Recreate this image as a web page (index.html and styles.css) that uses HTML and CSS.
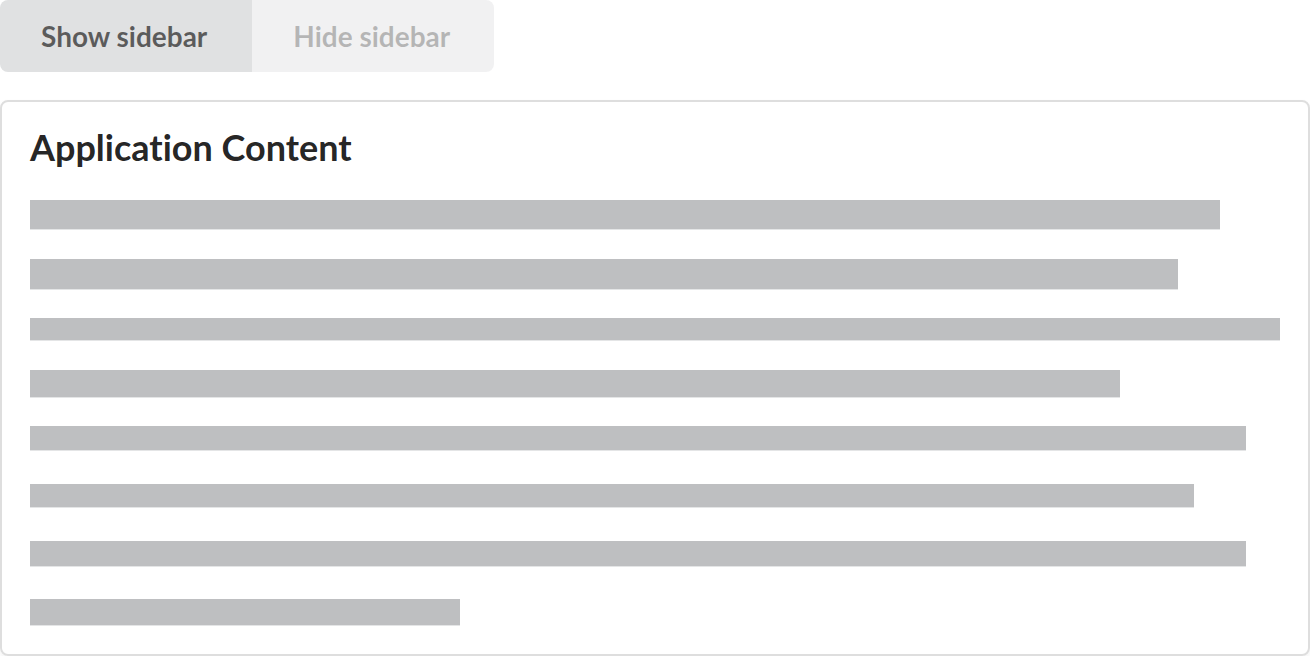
FILE: index.html
```html
<!DOCTYPE html>
<html>
<head>
<meta charset="utf-8">
<link rel="stylesheet" href="styles.css">
</head>
<body>
<div class="buttons">
  <button class="btn show">Show sidebar</button>
  <button class="btn disabled">Hide sidebar</button>
</div>
<div class="segment">
  <h3 class="header">Application Content</h3>
  <div class="lines">
    <div class="line" style="width:1190px;height:29px;margin-top:0"></div>
    <div class="line" style="width:1148px;height:30px;margin-top:30px"></div>
    <div class="line" style="width:1250px;height:22px;margin-top:29px"></div>
    <div class="line" style="width:1090px;height:27px;margin-top:30px"></div>
    <div class="line" style="width:1216px;height:24px;margin-top:29px"></div>
    <div class="line" style="width:1164px;height:23px;margin-top:34px"></div>
    <div class="line" style="width:1216px;height:25px;margin-top:34px"></div>
    <div class="line" style="width:430px;height:26px;margin-top:33px"></div>
  </div>
</div>
</body>
</html>
```
FILE: styles.css
```css
html, body {
  margin: 0;
  padding: 0;
  background: #ffffff;
  font-family: Lato, "Helvetica Neue", Arial, sans-serif;
  font-variant-ligatures: none;
}
body {
  width: 1310px;
  height: 656px;
  overflow: hidden;
}
.buttons {
  display: inline-flex;
  border-radius: 8px;
  overflow: hidden;
}
.btn {
  border: none;
  margin: 0;
  font-family: Lato, sans-serif;
  font-variant-ligatures: none;
  font-weight: 700;
  font-size: 28px;
  line-height: 28px;
  padding: 22px 42px;
  background: #e0e1e2;
  color: rgba(0, 0, 0, 0.6);
  cursor: pointer;
}
.btn.show {
  padding-left: 41px;
  padding-right: 45px;
}
.btn.disabled {
  opacity: 0.45;
  padding-left: 41px;
  padding-right: 44px;
}
.segment {
  margin-top: 28px;
  height: 556px;
  box-sizing: border-box;
  border: 2px solid #dedede;
  border-radius: 8px;
  padding: 28px 28px;
  box-shadow: 0 2px 4px rgba(34, 36, 38, 0.06);
}
.header {
  margin: 0;
  font-size: 36px;
  line-height: 34px;
  font-weight: 700;
  color: rgba(0, 0, 0, 0.87);
}
.lines {
  margin-top: 36px;
  display: flex;
  flex-direction: column;
}
.line {
  background: #bebfc1;
  box-shadow: 0 1px 0 #e4e5e6;
}
```
